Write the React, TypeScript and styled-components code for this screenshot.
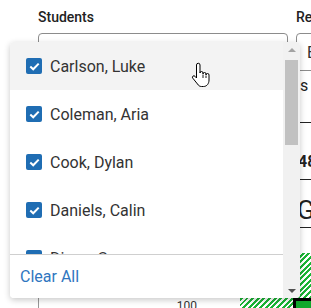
import React from 'react';
import styled, { createGlobalStyle } from 'styled-components';

const GlobalStyle = createGlobalStyle`
  body {
    margin: 0;
    background: #fff;
    font-family: Roboto, "Liberation Sans", sans-serif;
    color: #222;
  }
`;

const Page = styled.div`
  width: 311px;
  height: 308px;
  overflow: hidden;
  padding: 9px 0 0 38px;
  box-sizing: border-box;
  display: grid;
  grid-template-columns: 250px 200px;
  column-gap: 8px;
  align-content: start;
`;

const Field = styled.div`
  position: relative;
  display: flex;
  flex-direction: column;
  gap: 7px;
`;

const Label = styled.label`
  font-size: 14px;
  font-weight: 500;
  line-height: 17px;
  color: #222;
`;

const Input = styled.div`
  height: 38px;
  box-sizing: border-box;
  border: 1px solid #8c8c8c;
  border-radius: 4px;
  padding: 0 10px;
  display: flex;
  align-items: center;
  font-size: 16px;
  color: #333;
  white-space: nowrap;
`;

const Stats = styled.div`
  grid-column: 2;
  display: flex;
  flex-direction: column;
`;

const StatRow = styled.div<{ $h: number; $size: number; $shift: number; $pl: number; $bold?: boolean }>`
  height: ${(p) => p.$h}px;
  box-sizing: border-box;
  border-bottom: 1px solid #222;
  display: flex;
  align-items: center;
  padding-left: ${(p) => p.$pl}px;
  padding-top: ${(p) => Math.max(p.$shift, 0)}px;
  padding-bottom: ${(p) => Math.max(-p.$shift, 0)}px;
  font-size: ${(p) => p.$size}px;
  font-weight: ${(p) => (p.$bold ? 700 : 400)};
  white-space: nowrap;
`;

const Chart = styled.div`
  grid-column: 1 / span 2;
  margin-top: 25px;
  height: 60px;
  border-left: 1px solid #999;
  display: flex;
  align-items: flex-start;
`;

const AxisLabel = styled.span`
  width: 158px;
  padding-top: 46px;
  text-align: right;
  font-size: 12px;
  color: #333;
`;

const Bar = styled.div`
  margin-left: 43px;
  width: 90px;
  height: 60px;
  background: repeating-linear-gradient(
    -45deg,
    #1bb535 0 2px,
    #fff 2px 4px
  );
  display: flex;
  align-items: flex-end;
  justify-content: flex-end;
`;

const Marker = styled.div`
  width: 30px;
  height: 12px;
  margin-right: 1px;
  margin-bottom: -3px;
  background: #11a82c;
  border: 3px solid #000;
`;

const Dropdown = styled.div`
  position: absolute;
  left: -28px;
  top: 33px;
  width: 290px;
  height: 256px;
  background: #fff;
  border-radius: 4px;
  box-shadow: 0 2px 6px rgba(0, 0, 0, 0.22);
  overflow: hidden;
  z-index: 2;
  display: flex;
`;

const ListPane = styled.div`
  flex: 1;
  display: flex;
  flex-direction: column;
  min-width: 0;
`;

const OptionList = styled.div`
  flex: 1;
  overflow: hidden;
`;

const ScrollTrack = styled.div`
  width: 17px;
  background: #f1f1f1;
  display: flex;
  flex-direction: column;
  align-items: center;
`;

const ScrollArrow = styled.div<{ $down?: boolean }>`
  height: 17px;
  width: 17px;
  display: flex;
  align-items: center;
  justify-content: center;
  margin-top: ${(p) => (p.$down ? 'auto' : '0')};
`;

const Triangle = styled.span<{ $down?: boolean }>`
  width: 0;
  height: 0;
  border-left: 4px solid transparent;
  border-right: 4px solid transparent;
  ${(p) =>
    p.$down
      ? 'border-top: 4px solid #505050; margin-top: 2px;'
      : 'border-bottom: 4px solid #a3a3a3; margin-bottom: 2px;'}
`;

const ScrollThumb = styled.div`
  margin-top: 1px;
  width: 13px;
  height: 85px;
  background: #c1c1c1;
`;

const Option = styled.div<{ $hover?: boolean }>`
  position: relative;
  height: 48px;
  display: flex;
  align-items: center;
  gap: 8px;
  padding-left: 16px;
  background: ${(p) => (p.$hover ? '#f3f3f3' : '#fff')};
  font-size: 16px;
  color: #333;
`;

const Check = styled.span`
  width: 16px;
  height: 16px;
  border-radius: 2px;
  background: #1f6db3;
  display: flex;
  align-items: center;
  justify-content: center;
`;

const Footer = styled.div`
  height: 44px;
  flex-shrink: 0;
  box-sizing: border-box;
  border-top: 1px solid #cfcfcf;
  background: #fff;
  display: flex;
  align-items: center;
  padding-left: 10px;
`;

const ClearButton = styled.button`
  border: 0;
  background: none;
  padding: 0;
  font: inherit;
  font-size: 16px;
  color: #2f76c0;
  cursor: pointer;
`;

const Cursor = styled.svg`
  position: absolute;
  left: 181px;
  top: 20px;
`;

const students = [
  'Carlson, Luke',
  'Coleman, Aria',
  'Cook, Dylan',
  'Daniels, Calin',
  'Dixon, Grace',
  'Evans, Maya',
  'Foster, Noah',
  'Garcia, Leo',
  'Hughes, Emma',
  'Jensen, Owen',
  'Kim, Sara',
  'Lopez, Ian',
  'Miller, Ava',
];

const CheckIcon = () => (
  <svg width="11" height="9" viewBox="0 0 11 9">
    <path d="M1.3 4.6 L4.2 7.3 L9.7 1.6" fill="none" stroke="#fff" strokeWidth="2" />
  </svg>
);

const HandCursor = () => (
  <Cursor width="21" height="26" viewBox="0 0 21 26">
    <path
      d="M5.5 3 a1.75 1.75 0 0 1 3.5 0 V11 a1.5 1.5 0 0 1 3 0 V12 a1.5 1.5 0 0 1 3 0 V13 a1.5 1.5 0 0 1 3 0 V18 c0 3.5 -2 6.5 -5.5 6.5 H10.5 c-2 0 -3 -1 -4 -2.5 L1.8 16.2 a1.4 1.4 0 0 1 2.2 -1.9 L5.5 16 Z"
      fill="#fff"
      stroke="#000"
      strokeWidth="1"
      strokeLinejoin="round"
    />
    <path d="M12 12.5 V16 M15 13.5 V16" stroke="#000" strokeWidth="0.9" />
  </Cursor>
);

export default function App() {
  return (
    <>
      <GlobalStyle />
      <Page>
        <Field>
          <Label>Students</Label>
          <Input />
          <Dropdown>
            <ListPane>
              <OptionList>
                {students.map((name, i) => (
                  <Option key={name} $hover={i === 0}>
                    <Check>
                      <CheckIcon />
                    </Check>
                    {name}
                    {i === 0 && <HandCursor />}
                  </Option>
                ))}
              </OptionList>
              <Footer>
                <ClearButton>Clear All</ClearButton>
              </Footer>
            </ListPane>
            <ScrollTrack>
              <ScrollArrow>
                <Triangle />
              </ScrollArrow>
              <ScrollThumb />
              <ScrollArrow $down>
                <Triangle $down />
              </ScrollArrow>
            </ScrollTrack>
          </Dropdown>
        </Field>
        <Field>
          <Label>Reading Level</Label>
          <Input>Early Reader</Input>
        </Field>
        <Stats>
          <StatRow $h={52} $size={16} $shift={-22} $pl={4}>
            s
          </StatRow>
          <StatRow $h={57} $size={16} $shift={20} $pl={2} $bold>
            48
          </StatRow>
          <StatRow $h={48} $size={26} $shift={12} $pl={1}>
            Growth
          </StatRow>
        </Stats>
        <Chart>
          <AxisLabel>100</AxisLabel>
          <Bar>
            <Marker />
          </Bar>
        </Chart>
      </Page>
    </>
  );
}
